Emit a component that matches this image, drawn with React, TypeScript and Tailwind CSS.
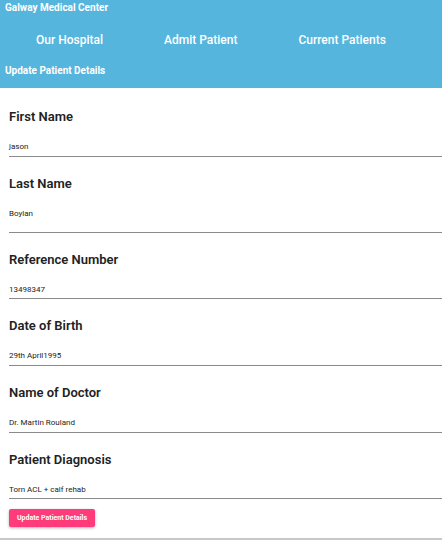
import React from 'react';

// heights of the input box under each label, tuned to the screenshot
const fields = [
  { label: 'First Name', value: 'jason', h: 'h-[18px]' },
  { label: 'Last Name', value: 'Boylan', h: 'h-[27px]' },
  { label: 'Reference Number', value: '13498347', h: 'h-[17px]' },
  { label: 'Date of Birth', value: '29th April1995', h: 'h-[18px]' },
  { label: 'Name of Doctor', value: 'Dr. Martin Rouland', h: 'h-[18px]' },
  { label: 'Patient Diagnosis', value: 'Torn ACL + calf rehab', h: 'h-[17px]' },
];

const Field = ({ label, value, h }: { label: string; value: string; h: string }) => (
  <div className="flex flex-col">
    <label className="text-[13px] font-semibold leading-[16px] text-[#222]">{label}</label>
    <div className={`mt-[14px] ${h} border-b border-[#8a8a8a] pt-[3px] text-[8px] leading-[10px] text-[#222]`}>
      {value}
    </div>
  </div>
);

export default function App() {
  return (
    <div className="h-[541px] w-[442px] overflow-hidden bg-white font-['Roboto',sans-serif]">
      <header className="flex h-[88px] flex-col bg-[#56b5dd] text-white">
        <div className="px-[5px] pt-[2px] text-[10px] font-bold leading-[12px]">Galway Medical Center</div>
        <nav className="mt-[18px] flex gap-[61px] pl-[36px] text-[12px] font-medium leading-[16px]">
          <span>Our Hospital</span>
          <span>Admit Patient</span>
          <span>Current Patients</span>
        </nav>
        <div className="mt-[17px] px-[5px] text-[10px] font-bold leading-[12px]">Update Patient Details</div>
      </header>
      <main className="flex flex-col gap-[19px] pl-[9px] pt-[21px]">
        {fields.map((f) => (
          <Field key={f.label} {...f} />
        ))}
      </main>
      <div className="ml-[9px] mt-[10px] flex h-[18px] w-[86px] items-center justify-center rounded-[2px] bg-[#ff3b7c] text-[7px] font-bold text-white shadow-[0_1px_3px_rgba(0,0,0,0.3)]">
        Update Patient Details
      </div>
      <div className="mt-[11px] h-[2px] w-full bg-[#c8c8c8]" />
    </div>
  );
}
